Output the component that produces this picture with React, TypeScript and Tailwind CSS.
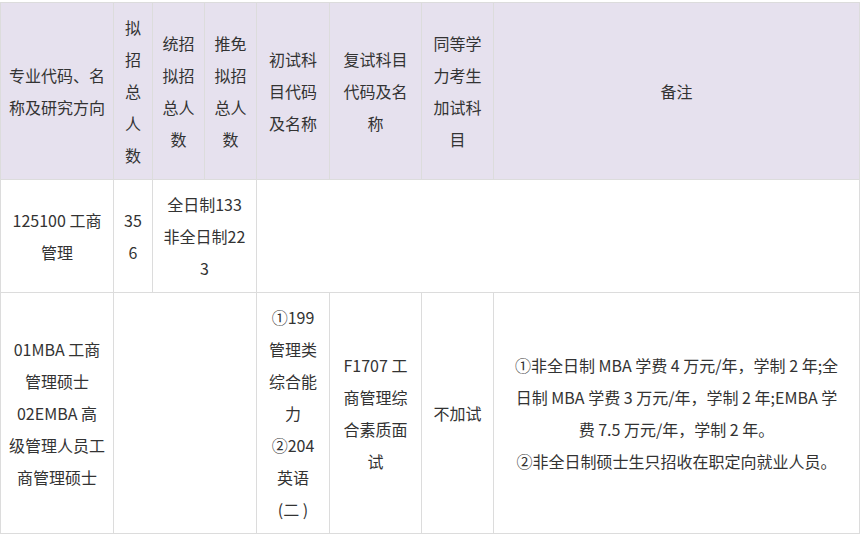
import React from 'react';

const th = 'border border-[#dcdcdc] px-2 py-2 align-middle text-center font-normal whitespace-nowrap';
const td = 'border border-[#dcdcdc] px-2 py-2 align-middle text-center whitespace-nowrap';

const Lines = ({ lines }: { lines: string[] }) => (
  <>
    {lines.map((l, i) => (
      <div key={i}>{l}</div>
    ))}
  </>
);

export default function App() {
  return (
    <div className="w-[864px] h-[535px] bg-white pt-[2px] font-['Noto_Sans_CJK_SC',sans-serif] text-[16px] leading-[32px] text-[#333333]">
      <table className="table-fixed border-collapse w-[859px]">
        <colgroup>
          <col className="w-[113px]" />
          <col className="w-[39px]" />
          <col className="w-[52px]" />
          <col className="w-[52px]" />
          <col className="w-[73px]" />
          <col className="w-[92px]" />
          <col className="w-[72px]" />
          <col className="w-[366px]" />
        </colgroup>
        <thead>
          <tr className="bg-[#e6e1ee]">
            <th className={th}>
              <Lines lines={['专业代码、名', '称及研究方向']} />
            </th>
            <th className={th}>
              <Lines lines={['拟', '招', '总', '人', '数']} />
            </th>
            <th className={th}>
              <Lines lines={['统招', '拟招', '总人', '数']} />
            </th>
            <th className={th}>
              <Lines lines={['推免', '拟招', '总人', '数']} />
            </th>
            <th className={th}>
              <Lines lines={['初试科', '目代码', '及名称']} />
            </th>
            <th className={th}>
              <Lines lines={['复试科目', '代码及名', '称']} />
            </th>
            <th className={th}>
              <Lines lines={['同等学', '力考生', '加试科', '目']} />
            </th>
            <th className={th}>备注</th>
          </tr>
        </thead>
        <tbody>
          <tr>
            <td className={td}>
              <Lines lines={['125100 工商', '管理']} />
            </td>
            <td className={td}>
              <Lines lines={['35', '6']} />
            </td>
            <td className={td} colSpan={2}>
              <Lines lines={['全日制133', '非全日制22', '3']} />
            </td>
            <td className={td} colSpan={4}></td>
          </tr>
          <tr>
            <td className={td}>
              <Lines lines={['01MBA 工商', '管理硕士', '02EMBA 高', '级管理人员工', '商管理硕士']} />
            </td>
            <td className={td} colSpan={3}></td>
            <td className={td}>
              <Lines lines={['①199', '管理类', '综合能', '力', '②204', '英语', '(二 )']} />
            </td>
            <td className={td}>
              <Lines lines={['F1707 工', '商管理综', '合素质面', '试']} />
            </td>
            <td className={td}>不加试</td>
            <td className={td}>
              <Lines
                lines={[
                  '①非全日制 MBA 学费 4 万元/年，学制 2 年;全',
                  '日制 MBA 学费 3 万元/年，学制 2 年;EMBA 学',
                  '费 7.5 万元/年，学制 2 年。',
                  '②非全日制硕士生只招收在职定向就业人员。',
                ]}
              />
            </td>
          </tr>
        </tbody>
      </table>
    </div>
  );
}
